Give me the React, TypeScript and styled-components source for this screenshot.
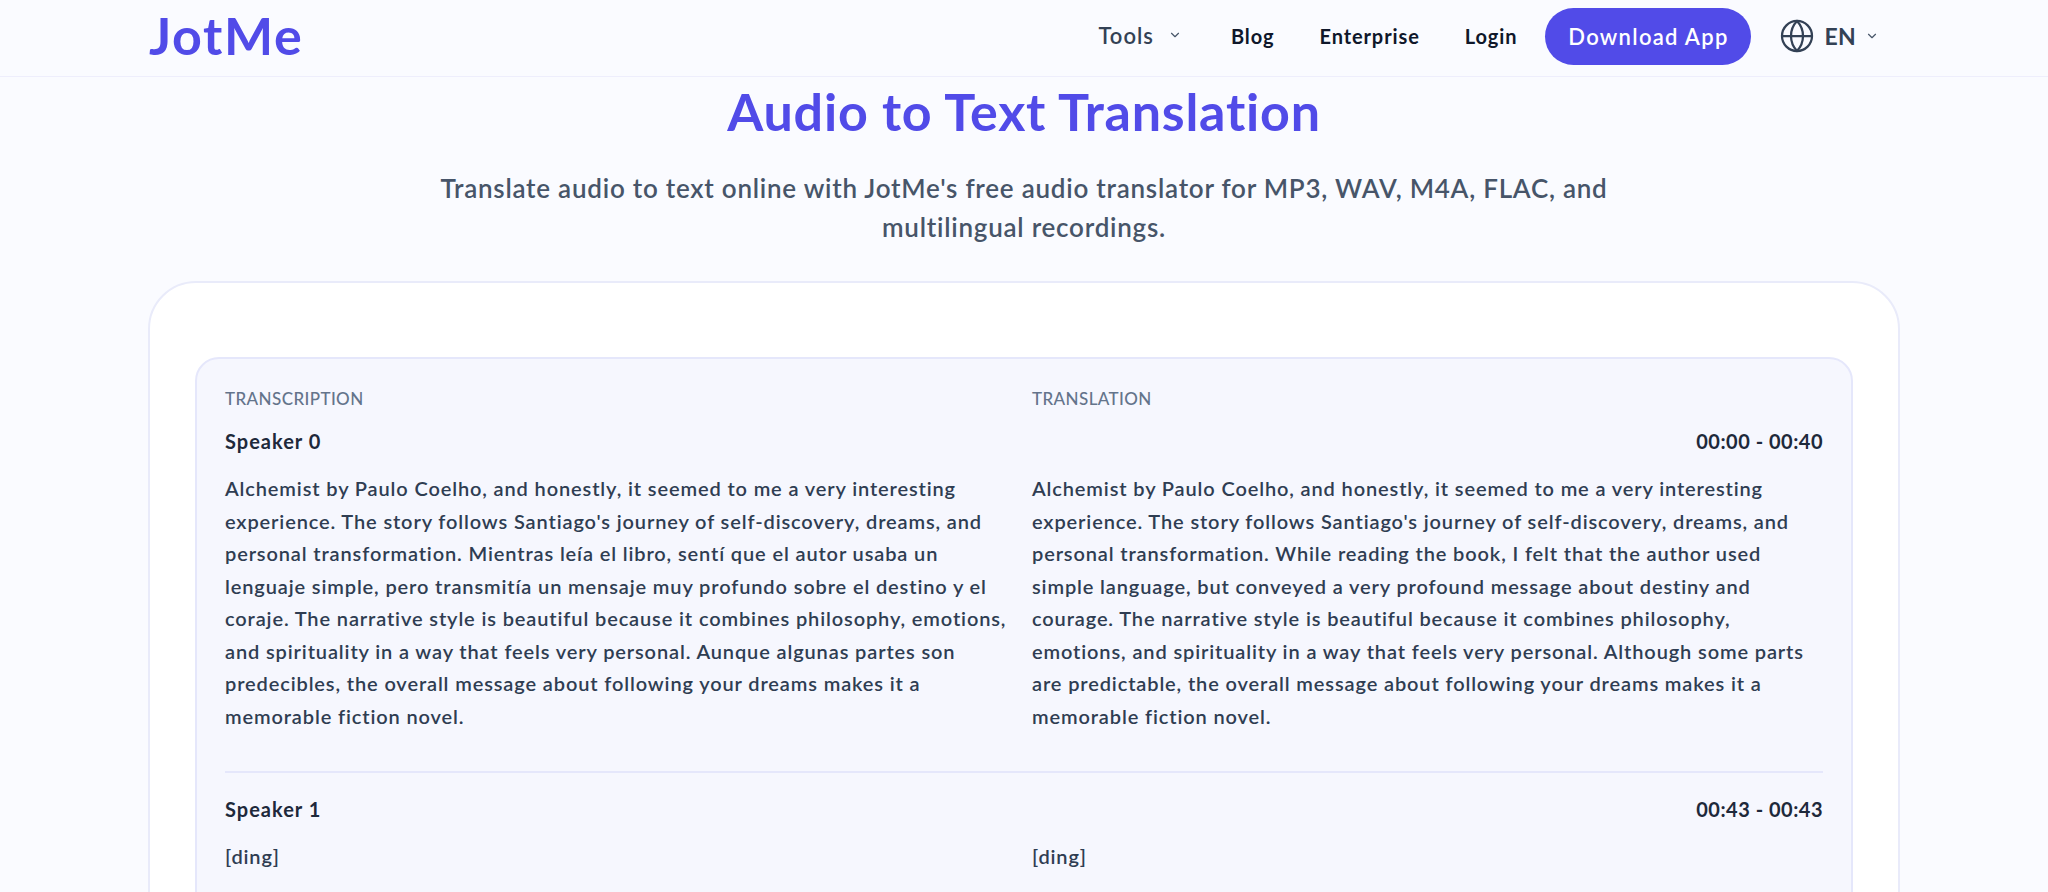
import React from "react";
import styled, { createGlobalStyle } from "styled-components";
import { ChevronDown, Globe } from "lucide-react";

const Global = createGlobalStyle`
  html, body { margin: 0; padding: 0; background: #fafbff; }
  body { height: 892px; overflow: hidden; font-family: "Lato", "Noto Sans", sans-serif; }
  * { box-sizing: border-box; }
`;

const Header = styled.header`
  height: 77px;
  border-bottom: 1.5px solid #eeeefc;
  padding: 0 149px;
  display: flex;
  align-items: center;
  justify-content: space-between;
`;
const Logo = styled.div`
  font-size: 52px;
  font-weight: 700;
  color: #514be8;
  letter-spacing: 1.6px;
  line-height: 1;
  margin-top: -6px;
`;
const Nav = styled.nav`
  display: flex;
  align-items: center;
  height: 100%;
  padding-right: 20px;
  padding-bottom: 4px;
`;
const NavItem = styled.a<{ $gap: number; $muted?: boolean }>`
  display: flex;
  align-items: center;
  margin-left: ${(p) => p.$gap}px;
  margin-top: ${(p) => (p.$muted ? -2 : 0)}px;
  font-size: ${(p) => (p.$muted ? 22 : 20)}px;
  font-weight: ${(p) => (p.$muted ? 600 : 700)};
  letter-spacing: ${(p) => (p.$muted ? 1 : 0.9)}px;
  color: ${(p) => (p.$muted ? "#334155" : "#0f172a")};
`;
const Caret = styled(ChevronDown)<{ $gap: number }>`
  margin-left: ${(p) => p.$gap}px;
  color: #475569;
`;
const DownloadButton = styled.button`
  margin-left: 28px;
  width: 206px;
  height: 57px;
  border: 0;
  border-radius: 29px;
  background: #514be8;
  color: #fff;
  font: 600 22px "Lato", sans-serif;
  letter-spacing: 1.3px;
`;
const Lang = styled.div`
  display: flex;
  align-items: center;
  margin-left: 28px;
  font-size: 23px;
  font-weight: 700;
  color: #334155;
`;
const LangText = styled.span`
  margin-left: 9px;
  letter-spacing: 0.3px;
`;
const Main = styled.main`
  padding: 0 148px;
`;
const Title = styled.h1`
  margin: 3px 0 0;
  text-align: center;
  font-size: 52px;
  line-height: 62px;
  font-weight: 700;
  color: #514be8;
  letter-spacing: 0.77px;
`;
const Sub = styled.p`
  margin: 27px 0 0;
  text-align: center;
  font-size: 26px;
  line-height: 39px;
  font-weight: 600;
  color: #475569;
  letter-spacing: 0.76px;
`;
const Card = styled.section`
  margin-top: 34px;
  height: 800px;
  border: 2px solid #e9ebfa;
  border-radius: 48px;
  background: #fff;
  padding: 74px 45px 0;
`;
const Inner = styled.div`
  height: 700px;
  border: 2px solid #e5e7fb;
  border-radius: 24px;
  background: #f6f7fe;
  padding: 28px 28px 0;
`;
const Labels = styled.div`
  display: grid;
  grid-template-columns: 1fr 1fr;
  column-gap: 16px;
`;
const Label = styled.div`
  font-size: 17px;
  line-height: 24px;
  font-weight: 500;
  color: #64748b;
  letter-spacing: 0.4px;
`;
const Segment = styled.div<{ $divided?: boolean }>`
  ${(p) => p.$divided && "border-top: 2px solid #e5e7fb; margin-top: 39px; padding-top: 22px;"}
`;
const SegHead = styled.div<{ $top: number }>`
  display: flex;
  justify-content: space-between;
  margin-top: ${(p) => p.$top}px;
  font-size: 20px;
  line-height: 28px;
  font-weight: 700;
  color: #1e293b;
`;
const SpeakerName = styled.span`
  letter-spacing: 1px;
`;
const TimeRange = styled.span`
  letter-spacing: 0.5px;
`;
const Columns = styled.div`
  margin-top: 17px;
  display: grid;
  grid-template-columns: 1fr 1fr;
  column-gap: 16px;
`;
const Body = styled.div`
  font-size: 20px;
  line-height: 32.5px;
  font-weight: 600;
  color: #2f3d52;
  letter-spacing: 0.87px;
  white-space: nowrap;
`;
const Line = styled.span`
  display: block;
`;

const left = [
  "Alchemist by Paulo Coelho, and honestly, it seemed to me a very interesting",
  "experience. The story follows Santiago's journey of self-discovery, dreams, and",
  "personal transformation. Mientras leía el libro, sentí que el autor usaba un",
  "lenguaje simple, pero transmitía un mensaje muy profundo sobre el destino y el",
  "coraje. The narrative style is beautiful because it combines philosophy, emotions,",
  "and spirituality in a way that feels very personal. Aunque algunas partes son",
  "predecibles, the overall message about following your dreams makes it a",
  "memorable fiction novel.",
];
const right = [
  "Alchemist by Paulo Coelho, and honestly, it seemed to me a very interesting",
  "experience. The story follows Santiago's journey of self-discovery, dreams, and",
  "personal transformation. While reading the book, I felt that the author used",
  "simple language, but conveyed a very profound message about destiny and",
  "courage. The narrative style is beautiful because it combines philosophy,",
  "emotions, and spirituality in a way that feels very personal. Although some parts",
  "are predictable, the overall message about following your dreams makes it a",
  "memorable fiction novel.",
];

const Text = ({ lines }: { lines: string[] }) => (
  <Body>
    {lines.map((l) => (
      <Line key={l}>{l}</Line>
    ))}
  </Body>
);

export default function App() {
  return (
    <>
      <Global />
      <Header>
        <Logo>JotMe</Logo>
        <Nav>
          <NavItem $gap={0} $muted>
            Tools
            <Caret $gap={14} size={14} />
          </NavItem>
          <NavItem $gap={49}>Blog</NavItem>
          <NavItem $gap={45}>Enterprise</NavItem>
          <NavItem $gap={45}>Login</NavItem>
          <DownloadButton>Download App</DownloadButton>
          <Lang>
            <Globe size={36} strokeWidth={1.5} />
            <LangText>EN</LangText>
            <Caret $gap={9} size={14} />
          </Lang>
        </Nav>
      </Header>
      <Main>
        <Title>Audio to Text Translation</Title>
        <Sub>
          Translate audio to text online with JotMe's free audio translator for MP3, WAV, M4A, FLAC, and
          <br />
          multilingual recordings.
        </Sub>
        <Card>
          <Inner>
            <Labels>
              <Label>TRANSCRIPTION</Label>
              <Label>TRANSLATION</Label>
            </Labels>
            <Segment>
              <SegHead $top={16}>
                <SpeakerName>Speaker 0</SpeakerName>
                <TimeRange>00:00 - 00:40</TimeRange>
              </SegHead>
              <Columns>
                <Text lines={left} />
                <Text lines={right} />
              </Columns>
            </Segment>
            <Segment $divided>
              <SegHead $top={0}>
                <SpeakerName>Speaker 1</SpeakerName>
                <TimeRange>00:43 - 00:43</TimeRange>
              </SegHead>
              <Columns>
                <Text lines={["[ding]"]} />
                <Text lines={["[ding]"]} />
              </Columns>
            </Segment>
          </Inner>
        </Card>
      </Main>
    </>
  );
}
